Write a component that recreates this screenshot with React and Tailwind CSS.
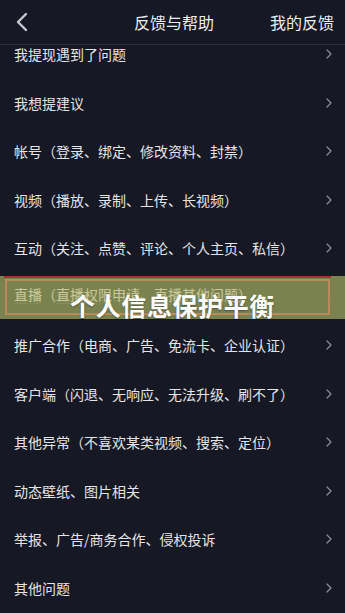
import React from "react";

const items = [
  "我提现遇到了问题",
  "我想提建议",
  "帐号（登录、绑定、修改资料、封禁）",
  "视频（播放、录制、上传、长视频）",
  "互动（关注、点赞、评论、个人主页、私信）",
  "直播（直播权限申请、直播其他问题）",
  "推广合作（电商、广告、免流卡、企业认证）",
  "客户端（闪退、无响应、无法升级、刷不了）",
  "其他异常（不喜欢某类视频、搜索、定位）",
  "动态壁纸、图片相关",
  "举报、广告/商务合作、侵权投诉",
  "其他问题",
];

function Chevron() {
  return (
    <svg width="6" height="10" viewBox="0 0 6 10" fill="none">
      <path d="M1 1l4 4-4 4" stroke="#8e8f96" strokeWidth="1.2" strokeLinecap="round" strokeLinejoin="round" />
    </svg>
  );
}

export default function App() {
  return (
    <div
      className="relative w-[345px] h-[613px] overflow-hidden bg-[#161823] text-[#e6e6e8]"
      style={{ fontFamily: '"Noto Sans CJK SC", "Noto Sans", sans-serif' }}
    >
      <div className="relative z-10 h-[45px] flex items-center bg-[#161823] border-b border-[#2a2c36]">
        <div className="w-[48px] flex justify-start pl-[15px]">
          <svg width="14" height="20" viewBox="0 0 14 20" fill="none">
            <path d="M11 2L3 10l8 8" stroke="#c9cacf" strokeWidth="2.4" strokeLinecap="round" strokeLinejoin="round" />
          </svg>
        </div>
        <div className="flex-1 text-center text-[16px] text-[#ececee] pl-[30px] -mt-[1px]">反馈与帮助</div>
        <div className="text-[16px] text-[#ececee] pr-[11px] -mt-[1px]">我的反馈</div>
      </div>
      <div className="-mt-[15px] flex flex-col">
        {items.map((t, i) => (
          <div key={i} className="h-[48.5px] flex items-center justify-between pl-[14px] pr-[13px] shrink-0">
            <span className="text-[14px] leading-none text-[#e4e4e6]">{t}</span>
            <Chevron />
          </div>
        ))}
      </div>
      <div className="absolute left-0 right-0 top-[276px] h-[43px] bg-[#7f8852]/95">
        <div className="absolute left-[4px] w-[327px] top-0 h-[2px] bg-[#a8322f]" />
        <div className="absolute left-[5px] w-[325px] top-[3px] h-[36px] border-2 border-[#b98a5c]" />
        <div className="absolute left-[14px] top-[11px] text-[14px] leading-none text-[#c9c79a]">直播（直播权限申请、直播其他问题）</div>
        <div className="absolute inset-0 flex items-center justify-center pt-[16px]">
          <span
            className="text-[25px] font-bold text-white leading-none tracking-[0.6px]"
            style={{ textShadow: "0 1px 2px rgba(0,0,0,0.35)" }}
          >
            个人信息保护平衡
          </span>
        </div>
      </div>
    </div>
  );
}
